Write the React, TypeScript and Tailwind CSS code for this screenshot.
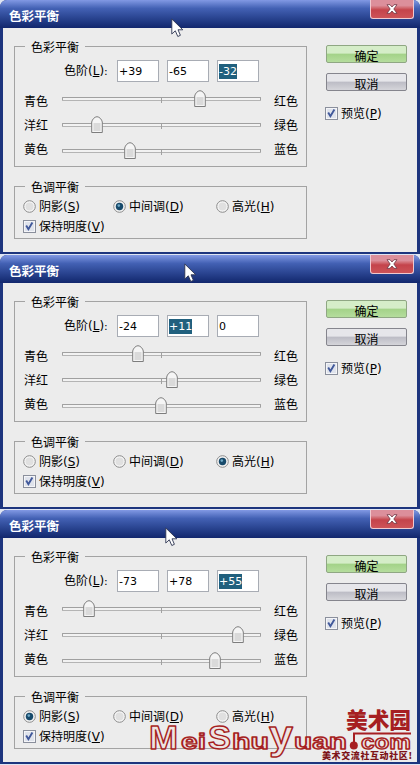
import React from "react";

type Channel = { left: string; right: string };

type DialogProps = {
    levels: number[];
    selected: number;
    tone: number;
    cursor: string;
};

const channels: Channel[] = [
    { left: "青色", right: "红色" },
    { left: "洋红", right: "绿色" },
    { left: "黄色", right: "蓝色" },
];

const tones = [
    { text: "阴影", hotkey: "S", width: "w-[90px]" },
    { text: "中间调", hotkey: "D", width: "w-[103px]" },
    { text: "高光", hotkey: "H", width: "w-[60px]" },
];

const dialogs: DialogProps[] = [
    { levels: [39, -65, -32], selected: 2, tone: 1, cursor: "left-[171px] top-[18px]" },
    { levels: [-24, 11, 0], selected: 1, tone: 2, cursor: "left-[184px] top-[8px]" },
    { levels: [-73, 78, 55], selected: 2, tone: 0, cursor: "left-[165px] top-[17px]" },
];

const signed = (value: number) => (value > 0 ? `+${value}` : `${value}`);

const Hotkey: React.FC<{ char: string }> = ({ char }) => (
    <span className="font-['DejaVu_Sans'] text-[12px]">
        (<span className="underline underline-offset-1">{char}</span>)
    </span>
);

const Check: React.FC = () => (
    <svg width="13" height="13" viewBox="0 0 13 13" className="shrink-0">
        <rect x="0.5" y="0.5" width="12" height="12" fill="#f4f5f8" stroke="#8a8f9c" />
        <rect x="2" y="2" width="9" height="9" fill="#dfe3ec" />
        <path d="M3.2 5.6 L5.4 9.2 L9.4 2.6" fill="none" stroke="#41599b" strokeWidth="1.9" />
    </svg>
);

const Radio: React.FC<{ checked: boolean }> = ({ checked }) => (
    <svg width="13" height="13" viewBox="0 0 13 13" className="shrink-0">
        <circle cx="6.5" cy="6.5" r="5.8" fill="#f6f6f6" stroke="#8b8b8b" />
        <circle cx="6.5" cy="6.5" r="4" fill="#e0e0e0" />
        {checked && (
            <>
                <circle cx="6.5" cy="6.5" r="3.7" fill="#174a6b" />
                <circle cx="5.8" cy="5.6" r="1.3" fill="#6fa9c6" />
            </>
        )}
    </svg>
);

const Cursor: React.FC = () => (
    <svg width="13" height="20" viewBox="0 0 13 20">
        <path
            d="M0.8 1 V16 L4.3 12.8 L6.8 18.5 L9.4 17.3 L7 11.8 H11.8 Z"
            fill="#ffffff"
            stroke="#2b3350"
            strokeWidth="0.9"
        />
    </svg>
);

const Slider: React.FC<{ value: number }> = ({ value }) => (
    <div className="relative flex h-[26px] w-[199px] items-center">
        <div className="h-[4px] w-full rounded-[1px] border border-[#a0a0a0] border-b-[#b4b4b4] bg-[#f2f2f2]" />
        <div className="absolute left-[99px] top-[11px] h-[6px] w-px bg-[#a0a0a0]" />
        <svg
            width="12"
            height="18"
            viewBox="0 0 12 18"
            className="absolute top-[4px] -ml-[6px]"
            style={{ left: 99.2 + value * 0.985 }}
        >
            <path
                d="M0.7 16.5 V6 C1.2 3.5 3.5 0.8 6 0.7 C8.5 0.8 10.8 3.5 11.3 6 V16.5 Z"
                fill="#f5f5f5"
                stroke="#7d7d7d"
            />
            <rect x="2.5" y="7" width="7" height="8" fill="#dadada" />
        </svg>
    </div>
);

const Dialog: React.FC<DialogProps> = ({ levels, selected, tone, cursor }) => (
    <section className="relative h-[255px] w-[420px] bg-[#dfe5f3]">
        <div className="flex h-[254px] flex-col overflow-hidden rounded-t-[7px] bg-[#1d357e]">
            <header className="flex h-[28px] shrink-0 items-start justify-between bg-linear-to-b from-[#8299e4] via-[#4361b4] via-30% to-[#12276d] pl-[9px] pr-[6px]">
                <h1 className="mt-[7px] text-[12.5px] font-bold leading-[17px] text-white">
                    色彩平衡
                </h1>
                <div className="flex h-[19px] w-[44px] items-center justify-center rounded-b-[3px] border border-t-0 border-[#f0c9cf] bg-linear-to-b from-[#dc8f9b] from-30% via-[#c4434b] via-55% to-[#cd5358]">
                    <svg width="12" height="10" viewBox="0 0 12 10">
                        <path
                            d="M1 0.7 H4 L6 3 L8 0.7 H11 L7.8 5 L11 9.3 H8 L6 7 L4 9.3 H1 L4.2 5 Z"
                            fill="#ffffff"
                            stroke="#6d3544"
                            strokeWidth="0.8"
                        />
                    </svg>
                </div>
            </header>
            <div className="mx-[3px] flex h-[224px] shrink-0 justify-between bg-[#ececec] pl-[11px] pr-[11px]">
                <div className="flex flex-col pt-[12px]">
                    <fieldset className="h-[127px] w-[293px] border border-[#a3a3a3] pl-[9px]">
                        <legend className="ml-px h-[13px] px-[6px] leading-[13px]">
                            色彩平衡
                        </legend>
                        <div className="flex items-center pt-[7px]">
                            <span className="ml-[40px] w-[53px] whitespace-nowrap">
                                色阶<Hotkey char="L" />
                                <span className="font-['DejaVu_Sans'] text-[11px]">:</span>
                            </span>
                            <div className="flex gap-[8px]">
                                {levels.map((level, i) => (
                                    <div
                                        key={i}
                                        className="flex h-[22px] w-[42px] items-center border border-[#a8acb4] bg-white pl-[1px] font-['DejaVu_Sans'] text-[11px]"
                                    >
                                        <span
                                            className={
                                                i === selected
                                                    ? "h-[15px] bg-[#20607e] leading-[15px] text-white"
                                                    : "leading-[15px]"
                                            }
                                        >
                                            {signed(level)}
                                        </span>
                                    </div>
                                ))}
                            </div>
                        </div>
                        <div className="flex whitespace-nowrap pt-[4px]">
                            <div className="w-[38px] shrink-0 pt-[3px]">
                                {channels.map(({ left }) => (
                                    <p key={left} className="h-[24px] leading-[24px]">{left}</p>
                                ))}
                            </div>
                            <div className="shrink-0">
                                {levels.map((level, i) => (
                                    <Slider key={i} value={level} />
                                ))}
                            </div>
                            <div className="ml-[13px] shrink-0 pt-[3px]">
                                {channels.map(({ right }) => (
                                    <p key={right} className="h-[24px] leading-[24px]">{right}</p>
                                ))}
                            </div>
                        </div>
                    </fieldset>
                    <fieldset className="mt-[13px] h-[59px] w-[293px] border border-[#a3a3a3] pl-[8px]">
                        <legend className="ml-[2px] h-[13px] px-[6px] leading-[13px]">
                            色调平衡
                        </legend>
                        <div className="flex pt-[3px]">
                            {tones.map(({ text, hotkey, width }, i) => (
                                <div
                                    key={hotkey}
                                    className={`flex h-[20px] items-center gap-[3px] whitespace-nowrap ${width}`}
                                >
                                    <Radio checked={i === tone} />
                                    <span>
                                        {text}
                                        <Hotkey char={hotkey} />
                                    </span>
                                </div>
                            ))}
                        </div>
                        <div className="flex h-[20px] items-center gap-[3px]">
                            <Check />
                            <span>
                                保持明度
                                <Hotkey char="V" />
                            </span>
                        </div>
                    </fieldset>
                </div>
                <div className="-mr-px flex w-[81px] flex-col pt-[17px]">
                    <button className="h-[18px] rounded-[2px] border border-[#8fa783] bg-linear-to-b from-[#d5edc8] from-45% via-[#a3d288] via-50% to-[#b5dd9d] leading-[20px]">
                        确定
                    </button>
                    <button className="mt-[10px] h-[18px] rounded-[2px] border border-[#85858d] bg-linear-to-b from-[#e6e6ea] from-45% via-[#bcbcc5] via-50% to-[#d5d5da] leading-[20px]">
                        取消
                    </button>
                    <div className="-ml-px mt-[12px] flex h-[20px] items-center gap-[3px] whitespace-nowrap">
                        <Check />
                        <span>
                            预览
                            <Hotkey char="P" />
                        </span>
                    </div>
                </div>
            </div>
        </div>
        <div className={`absolute ${cursor}`}>
            <Cursor />
        </div>
    </section>
);

// Site logo printed over the bottom right corner
const Watermark: React.FC = () => (
    <svg
        width="280"
        height="70"
        viewBox="140 695 280 70"
        className="absolute bottom-0 right-0"
        fontFamily="'Liberation Sans', sans-serif"
        fontWeight="bold"
    >
        <g fill="#eee4e2" stroke="#a61f22" strokeWidth="1.4" strokeLinejoin="round">
            <text y="748.5">
                <tspan x="149" fontSize="34" textLength="29" lengthAdjust="spacingAndGlyphs">M</tspan>
                <tspan x="181" fontSize="22" textLength="25" lengthAdjust="spacingAndGlyphs">ei</tspan>
                <tspan x="208" fontSize="34" textLength="23" lengthAdjust="spacingAndGlyphs">S</tspan>
                <tspan x="232" fontSize="22" textLength="37" lengthAdjust="spacingAndGlyphs">hu</tspan>
                <tspan x="269" fontSize="40" textLength="24" lengthAdjust="spacingAndGlyphs">y</tspan>
                <tspan x="294" fontSize="22" textLength="53" lengthAdjust="spacingAndGlyphs">uan</tspan>
                <tspan x="361" fontSize="21" textLength="50" lengthAdjust="spacingAndGlyphs">com</tspan>
            </text>
        </g>
        <g fill="#a61f22">
            <path d="M353 732.5 H411 V734.5 H355 V744 H353 Z" />
            <circle cx="353.8" cy="745.5" r="4" />
            <g fontFamily="'Noto Sans CJK SC', sans-serif" fontWeight="900">
                <text x="346" y="728" fontSize="22" textLength="65" lengthAdjust="spacingAndGlyphs">美术园</text>
                <text x="322" y="758.5" fontSize="9" fill="#7d1418" textLength="90">美术交流社互动社区!</text>
            </g>
        </g>
    </svg>
);

const App: React.FC = () => {
    return (
        <main className="relative h-[765px] w-[420px] overflow-hidden font-['Noto_Sans_CJK_SC',sans-serif] text-[12px] leading-[16px] text-black">
            {dialogs.map((dialog, i) => (
                <Dialog key={i} {...dialog} />
            ))}
            <Watermark />
        </main>
    );
};

export default App;
